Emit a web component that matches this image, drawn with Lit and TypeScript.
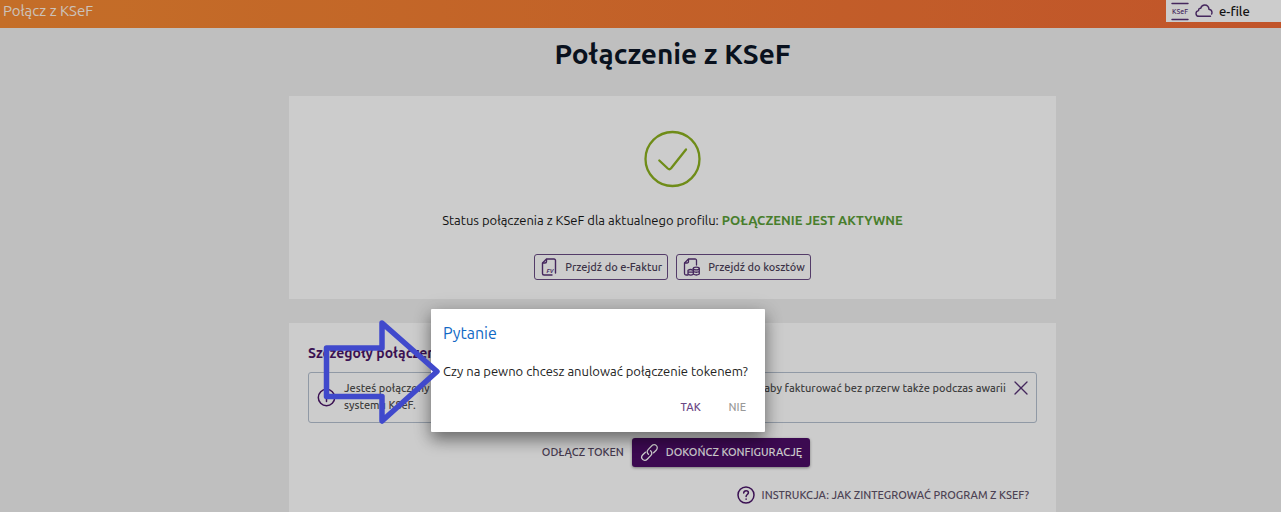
import { LitElement, html, css } from "lit";
import { customElement, state } from "lit/decorators.js";

@customElement("app-root")
export class AppRoot extends LitElement {
  @state() private noticeOpen = true;
  @state() private dialogOpen = true;

  static styles = css`
    :host {
      display: block;
      position: relative;
      min-height: 100vh;
      overflow: hidden;
      background: #efefef;
      color: #161616;
      font-family: Ubuntu, "Noto Sans", "Open Sans", sans-serif;
      font-size: 13px;
      line-height: 17px;
    }
    * {
      box-sizing: border-box;
    }
    svg {
      display: block;
      flex: none;
      fill: none;
      stroke: currentColor;
      stroke-linecap: round;
      stroke-linejoin: round;
    }
    svg text {
      fill: currentColor;
      stroke: none;
      font-weight: 500;
    }
    button {
      font: inherit;
      color: inherit;
      background: none;
      border: 0;
      padding: 0;
      cursor: pointer;
    }
    .bar {
      display: flex;
      justify-content: space-between;
      align-items: flex-start;
      height: 28px;
      background: linear-gradient(90deg, #f58a32, #f26a35);
    }
    .bar-title {
      padding: 2px 3px;
      font-size: 15px;
      line-height: 18px;
      color: #fff3e8;
    }
    .account {
      display: flex;
      align-items: center;
      gap: 6px;
      width: 115px;
      height: 22px;
      padding: 0 5px;
      background: #fff;
      font-weight: 500;
    }
    .account svg {
      color: #573175;
    }
    main {
      display: flex;
      flex-direction: column;
      align-items: center;
      padding: 0 0 0 64px;
    }
    h1 {
      margin: 8px 0 24px;
      font-size: 28px;
      line-height: 36px;
      font-weight: 700;
      color: #0c1626;
    }
    .card {
      width: 100%;
      max-width: 767px;
      background: #fff;
    }
    .status {
      display: flex;
      flex-direction: column;
      align-items: center;
      padding: 34px 16px 19px;
      margin-bottom: 24px;
    }
    .ok {
      color: #8bb01e;
    }
    .status-text {
      margin: 23px 0 25px;
      line-height: 18px;
    }
    .status-text strong {
      color: #5a9e37;
      font-weight: 700;
    }
    .links {
      display: flex;
      gap: 8px;
    }
    .outlined {
      display: flex;
      align-items: center;
      gap: 8px;
      height: 26px;
      padding: 0 5px 0 6px;
      border: 1px solid #6a4c84;
      border-radius: 3px;
      font-size: 11px;
      font-weight: 500;
      color: #4c3f58;
      text-decoration: none;
    }
    .outlined svg {
      color: #573175;
    }
    .outlined text {
      font-style: italic;
      font-weight: 700;
    }
    .details {
      padding: 20px 19px 24px;
    }
    h2 {
      margin: 0 0 9px;
      font-size: 14px;
      line-height: 20px;
      font-weight: 700;
      color: #4a1668;
    }
    .notice {
      display: flex;
      align-items: flex-start;
      gap: 4px;
      height: 51px;
      padding: 7px 7px 7px 8px;
      border: 1px solid #b4c0cf;
      border-radius: 3px;
      color: #505050;
      font-size: 11px;
      font-weight: 500;
    }
    .notice > svg {
      align-self: center;
      color: #4a1668;
    }
    .notice p {
      flex: 1;
      margin: 0;
      padding-left: 4px;
    }
    .close {
      color: #573175;
    }
    .actions {
      display: flex;
      justify-content: center;
      align-items: center;
      gap: 8px;
      margin-top: 15px;
      padding-left: 7px;
    }
    .flat {
      color: #54475f;
      font-size: 11px;
      font-weight: 500;
    }
    .primary {
      display: flex;
      align-items: center;
      gap: 7px;
      height: 29px;
      padding: 0 8px;
      border-radius: 3px;
      background: #4b0d66;
      color: #fff;
      font-size: 11px;
      font-weight: 500;
      box-shadow: 0 1px 3px rgba(0, 0, 0, 0.4);
    }
    .guide {
      display: flex;
      justify-content: flex-end;
      margin-top: 19px;
      padding-right: 8px;
    }
    .guide a {
      display: flex;
      align-items: center;
      gap: 7px;
      color: #5f536a;
      font-size: 11px;
      font-weight: 500;
      text-decoration: none;
    }
    .guide svg {
      color: #4a1668;
    }
    .backdrop {
      position: absolute;
      inset: 0;
      background: rgba(0, 0, 0, 0.2);
    }
    .dialog {
      position: absolute;
      top: 309px;
      left: 431px;
      display: block;
      width: 334px;
      margin: 0;
      padding: 14px 12px 16px;
      border: 0;
      border-radius: 1px;
      background: #fff;
      color: #222;
      box-shadow: 0 8px 16px rgba(0, 0, 0, 0.4), 0 2px 20px rgba(0, 0, 0, 0.15);
    }
    .dialog h3 {
      margin: 0 0 18px;
      font-size: 16px;
      line-height: 20px;
      font-weight: 400;
      color: #1068c4;
    }
    .dialog p {
      margin: 0 0 17px;
      line-height: 20px;
      white-space: nowrap;
    }
    .dialog-actions {
      display: flex;
      justify-content: flex-end;
      gap: 28px;
      padding-right: 7px;
      font-size: 11px;
      line-height: 18px;
      font-weight: 500;
    }
    .yes {
      color: #6b4885;
    }
    .no {
      color: #999;
    }
    .pointer {
      position: absolute;
      top: 318px;
      left: 322px;
      color: #4049cc;
      pointer-events: none;
    }
  `;

  private renderDialog() {
    return html`
      <div class="backdrop"></div>
      <dialog class="dialog" open aria-labelledby="question">
        <h3 id="question">Pytanie</h3>
        <p>Czy na pewno chcesz anulować połączenie tokenem?</p>
        <div class="dialog-actions">
          <button class="yes" @click=${() => (this.dialogOpen = false)}>TAK</button>
          <button class="no" @click=${() => (this.dialogOpen = false)}>NIE</button>
        </div>
      </dialog>
    `;
  }

  private renderNotice() {
    return html`
      <div class="notice" role="status">
        <svg width="19" height="19" viewBox="0 0 19 19" stroke-width="1.5">
          <circle cx="9.5" cy="9.5" r="8.2" />
          <path d="M9.5 8.5v5M9.5 5.2v.3" />
        </svg>
        <p>
          Jesteś połączony tokenem. Dokończ już konfigurację i dodaj certyfikat KSeF offline,
          aby fakturować bez przerw także podczas awarii systemu KSeF.
        </p>
        <button class="close" aria-label="Zamknij" @click=${() => (this.noticeOpen = false)}>
          <svg width="16" height="16" viewBox="0 0 16 16" stroke-width="1.3">
            <path d="M2 2l12 12M14 2L2 14" />
          </svg>
        </button>
      </div>
    `;
  }

  render() {
    return html`
      <header class="bar">
        <span class="bar-title">Połącz z KSeF</span>
        <div class="account">
          <svg width="18" height="20" viewBox="0 0 18 20" stroke-width="1.4">
            <path d="M1 2.500h16M1 18.500h16" />
            <text x="9" y="13" font-size="7" text-anchor="middle">KSeF</text>
          </svg>
          <svg width="18" height="14" viewBox="0 0 18 14" stroke-width="1.4">
            <path d="M15.500 12.300H4.200C2.300 12.300 1 11 1 9.400C1 7.900 2.100 6.800 3.600 6.600C3.500 5 4.300 4.200 5.700 4.200C6.300 2.200 7.800 1 9.700 1C12.300 1 14 2.800 13.900 5.300C15.900 5.600 17 6.800 17 8.500C17 9.100 16.900 9.600 16.600 10" />
          </svg>
          <span>e-file</span>
        </div>
      </header>

      <main>
        <h1>Połączenie z KSeF</h1>

        <section class="card status">
          <svg class="ok" width="58" height="58" viewBox="0 0 58 58" stroke-width="2.300">
            <circle cx="28.500" cy="29" r="27" />
            <path d="M15.300 30.500L23.800 38.500Q25.500 40 27.100 38.200L42 19.500" />
          </svg>
          <p class="status-text">
            Status połączenia z KSeF dla aktualnego profilu:
            <strong>POŁĄCZENIE JEST AKTYWNE</strong>
          </p>
          <nav class="links">
            <a class="outlined" href="#e-faktury">
              <svg width="16" height="18" viewBox="0 0 16 18" stroke-width="1.4">
                <path d="M14.500 15V2.500Q14.500 1 13 1H5.500L1.500 5V15.500Q1.500 17 3 17H11" />
                <path d="M5.500 1.500V3.500Q5.500 5 4 5H2" />
                <text x="9" y="14.500" font-size="5.500" text-anchor="middle">FV</text>
              </svg>
              Przejdź do e-Faktur
            </a>
            <a class="outlined" href="#koszty">
              <svg width="17" height="18" viewBox="0 0 17 18" stroke-width="1.3">
                <path d="M13.500 7V2.500Q13.500 1 12 1H5.500L1.500 5V15.500Q1.500 17 3 17H5" />
                <path d="M5.500 1.500V3.500Q5.500 5 4 5H2" />
                <ellipse cx="13.300" cy="10.500" rx="3" ry="1.400" />
                <path d="M10.300 10.500V16M16.300 10.500V16Q13.300 18 10.300 16M10.300 13.500Q13.300 15 16.300 13.500" />
                <path d="M10 12.200Q7.500 10.800 5 12.200V16Q7.500 17.800 10 16.500M5 14.200H10" />
              </svg>
              Przejdź do kosztów
            </a>
          </nav>
        </section>

        <section class="card details">
          <h2>Szczegóły połączenia</h2>
          ${this.noticeOpen ? this.renderNotice() : null}
          <div class="actions">
            <button class="flat" @click=${() => (this.dialogOpen = true)}>ODŁĄCZ TOKEN</button>
            <button class="primary">
              <svg width="19" height="19" viewBox="0 0 19 19" stroke-width="1.3">
                <path d="M8.400 11.200C7 9.800 7 7.700 8.300 6.400L11.800 2.800C13.200 1.400 15.200 1.400 16.400 2.600C17.600 3.800 17.600 5.800 16.200 7.200L13.600 9.800" />
                <path d="M10.600 7.800C12 9.200 12 11.300 10.700 12.600L7.200 16.200C5.800 17.600 3.800 17.600 2.600 16.400C1.400 15.200 1.400 13.200 2.800 11.800L5.400 9.200" />
              </svg>
              DOKOŃCZ KONFIGURACJĘ
            </button>
          </div>
          <div class="guide">
            <a href="#instrukcja">
              <svg width="18" height="18" viewBox="0 0 18 18" stroke-width="1.500">
                <circle cx="9" cy="9" r="8" />
                <path d="M6.700 7C6.800 5.500 7.800 4.700 9.100 4.700C10.500 4.700 11.400 5.600 11.400 6.800C11.400 8.500 9.100 8.600 9.100 10.500M9.100 13v.2" />
              </svg>
              INSTRUKCJA: JAK ZINTEGROWAĆ PROGRAM Z KSEF?
            </a>
          </div>
        </section>
      </main>

      ${this.dialogOpen ? this.renderDialog() : null}

      <svg class="pointer" width="120" height="108" viewBox="0 0 120 108" stroke-width="5.500" aria-hidden="true">
        <path d="M4.500 30H60V5L115 53.500L60 103V78.500H4.500Z" />
      </svg>
    `;
  }
}
